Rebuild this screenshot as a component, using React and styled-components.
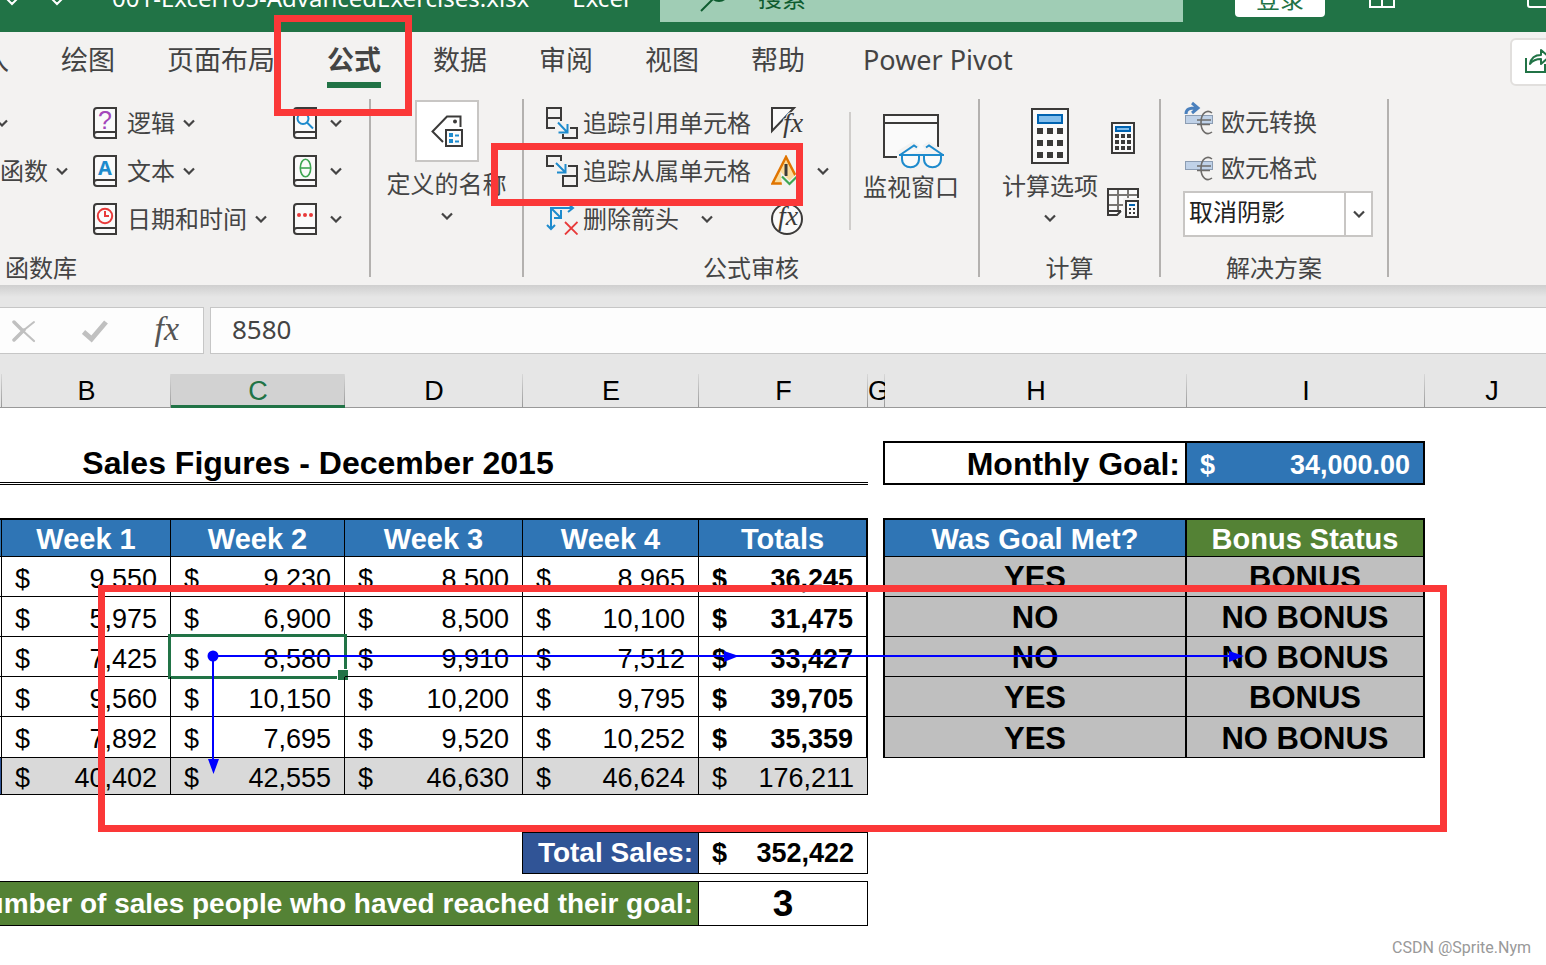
import styled, { createGlobalStyle } from 'styled-components';

const INK = '#3b3a39';
const BLUE = '#1e8bcd';
const GREEN = '#217346';

const weeks = ['Week 1', 'Week 2', 'Week 3', 'Week 4'];

const sales = [
  { weeks: ['9,550', '9,230', '8,500', '8,965'], total: '36,245', met: 'YES', bonus: 'BONUS' },
  { weeks: ['5,975', '6,900', '8,500', '10,100'], total: '31,475', met: 'NO', bonus: 'NO BONUS' },
  { weeks: ['7,425', '8,580', '9,910', '7,512'], total: '33,427', met: 'NO', bonus: 'NO BONUS' },
  { weeks: ['9,560', '10,150', '10,200', '9,795'], total: '39,705', met: 'YES', bonus: 'BONUS' },
  { weeks: ['7,892', '7,695', '9,520', '10,252'], total: '35,359', met: 'YES', bonus: 'NO BONUS' }
];

const totals = ['40,402', '42,555', '46,630', '46,624', '176,211'];

const columns = [
  { name: '', width: 234 },
  { name: 'B', width: 169 },
  { name: 'C', width: 174 },
  { name: 'D', width: 178 },
  { name: 'E', width: 176 },
  { name: 'F', width: 169 },
  { name: 'G', width: 17 },
  { name: 'H', width: 302 },
  { name: 'I', width: 238 },
  { name: 'J', width: 134 }
];

const tabs = ['插入', '绘图', '页面布局', '公式', '数据', '审阅', '视图', '帮助', 'Power Pivot'];

function App() {
  return (
    <Page>
      <GlobalStyle />
      <TitleBar />
      <TabBar>
        <Tabs>
          {tabs.map((tab) => (
            <Tab key={tab} $active={tab === '公式'} $wide={tab === 'Power Pivot'}>
              {tab}
            </Tab>
          ))}
        </Tabs>
        <ShareButton aria-label="Share">
          <svg width="26" height="26" viewBox="0 0 26 26" fill="none" stroke={GREEN} strokeWidth="2">
            <path d="M1 9v14h19v-8" />
            <path d="M5 15c1-6 5-9 11-9V1l8 7-8 7v-5c-5 0-8 1-11 5z" strokeLinejoin="round" />
          </svg>
        </ShareButton>
      </TabBar>
      <Ribbon>
        <LibraryGroup />
        <NamesGroup />
        <AuditGroup />
        <CalculationGroup />
        <SolutionsGroup />
      </Ribbon>
      <FormulaBar />
      <Sheet />
      <Highlight $left={274} $top={15} $width={138} $height={101} />
      <Highlight $left={491} $top={143} $width={312} $height={63} />
      <Highlight $left={98} $top={585} $width={1349} $height={247} />
      <Watermark>CSDN @Sprite.Nym</Watermark>
    </Page>
  );
}

export default App;

const TitleBar = () => (
  <Title>
    <TitleRow>
      <FileArea>
        <svg width="64" height="18" viewBox="0 0 64 18" fill="none" stroke="#fff" strokeWidth="2">
          <path d="M1 10l6 6 6-6M46 10l6 6 6-6" />
        </svg>
        <FileName>001-Excel105-AdvancedExercises.xlsx</FileName>
        <FileName>Excel</FileName>
      </FileArea>
      <SearchBox>
        <svg width="30" height="30" viewBox="0 0 30 30" fill="none" stroke="#0e5c2f" strokeWidth="2">
          <circle cx="19" cy="10" r="9" />
          <path d="M13 17L1 29" />
        </svg>
        <SearchInput aria-label="搜索" placeholder="搜索" />
      </SearchBox>
      <WindowArea>
        <LoginButton>登录</LoginButton>
        <svg width="26" height="22" viewBox="0 0 26 22" fill="none" stroke="#fff" strokeWidth="2">
          <path d="M1 1h24v20H1zM1 9h24M13 9v12" />
        </svg>
        <svg width="22" height="22" viewBox="0 0 22 22" fill="none" stroke="#fff" strokeWidth="2">
          <rect x="1" y="1" width="20" height="20" rx="2" />
        </svg>
      </WindowArea>
    </TitleRow>
  </Title>
);

const Chevron = () => (
  <svg width="12" height="8" viewBox="0 0 12 8" fill="none" stroke="#444" strokeWidth="2.2">
    <path d="M1 1.5l5 5 5-5" />
  </svg>
);

const Book = ({ children }) => (
  <svg width="24" height="32" viewBox="0 0 24 32" fill="none">
    <path d="M23 1H4a3 3 0 0 0-3 3v24a3 3 0 0 0 3 3h19z" fill="#fafafa" stroke={INK} strokeWidth="2" />
    <path d="M23 25H4a3 3 0 0 0-3 3" stroke={INK} strokeWidth="2" />
    {children}
  </svg>
);

const LibraryGroup = () => (
  <Group $width={371}>
    <GroupBody>
      <Column $width={93}>
        <Command $pull aria-label="自动求和">
          <Chevron />
        </Command>
        <Command $gap={8}>
          函数
          <Chevron />
        </Command>
      </Column>
      <Column $width={200}>
        <Command $gap={8}>
          <Book>
            <text x="12" y="22" fill="#a347ba" fontSize="25" fontFamily="Liberation Sans" textAnchor="middle">
              ?
            </text>
          </Book>
          <Label>逻辑</Label>
          <Chevron />
        </Command>
        <Command $gap={8}>
          <Book>
            <text x="12" y="20" fill={BLUE} fontSize="20" fontWeight="700" fontFamily="Noto Sans" textAnchor="middle">
              A
            </text>
          </Book>
          <Label>文本</Label>
          <Chevron />
        </Command>
        <Command $gap={8}>
          <Book>
            <circle cx="12" cy="13" r="7.2" stroke="#e83a3a" strokeWidth="2" />
            <path d="M12 8v5h4" stroke="#e83a3a" strokeWidth="2" />
          </Book>
          <Label>日期和时间</Label>
          <Chevron />
        </Command>
      </Column>
      <Column>
        <Command $gap={13} aria-label="查找与引用">
          <Book>
            <circle cx="10" cy="11.5" r="5.5" stroke={BLUE} strokeWidth="2" />
            <path d="M14 15.5l6 6" stroke={BLUE} strokeWidth="2" />
          </Book>
          <Chevron />
        </Command>
        <Command $gap={13} aria-label="数学和三角函数">
          <Book>
            <ellipse cx="12.5" cy="13" rx="5.2" ry="8.8" stroke="#3fa653" strokeWidth="1.6" />
            <path d="M7.500 13h10" stroke="#3fa653" strokeWidth="1.6" />
          </Book>
          <Chevron />
        </Command>
        <Command $gap={13} aria-label="其他函数">
          <Book>
            <g fill="#e83a3a">
              <circle cx="6" cy="12" r="2" />
              <circle cx="12" cy="12" r="2" />
              <circle cx="18" cy="12" r="2" />
            </g>
          </Book>
          <Chevron />
        </Command>
      </Column>
    </GroupBody>
    <GroupLabel $start>函数库</GroupLabel>
  </Group>
);

const NamesGroup = () => (
  <Group $width={153}>
    <GroupBody $center>
      <BigButton $top={1}>
        <NameBox>
          <svg width="32" height="32" viewBox="0 0 32 32" fill="none" stroke={INK} strokeWidth="2">
            <path d="M12 27L1.5 16.5 16 1.5h13.500V12" />
            <circle cx="24" cy="6.500" r="2" fill={INK} stroke="none" />
            <rect x="15" y="15" width="16" height="16" fill="#fafafa" />
            <g fill={BLUE} stroke="none">
              <path d="M18 18h4v4h-4zM18 24h4v4h-4zM24 19.500h4v2h-4zM24 25.500h4v2h-4z" />
            </g>
          </svg>
        </NameBox>
        <BigLabel>定义的名称</BigLabel>
        <Chevron />
      </BigButton>
    </GroupBody>
  </Group>
);

const AuditGroup = () => (
  <Group $width={456}>
    <GroupBody $indent>
      <Column $width={225}>
        <Command $gap={5}>
          <svg width="32" height="32" viewBox="0 0 32 32" fill="none" stroke={INK} strokeWidth="2">
            <path d="M9 21H1V1h14v13M1 11h14" />
            <path d="M24 21h7v10H17v-4" />
            <path d="M12 15.500l9 9.500M21.500 17v8.500h-9" stroke={BLUE} />
          </svg>
          追踪引用单元格
        </Command>
        <Command $gap={5}>
          <svg width="32" height="32" viewBox="0 0 32 32" fill="none" stroke={INK} strokeWidth="2">
            <path d="M8 11H1V1h14v5" />
            <path d="M22 11h9v20H17V21h14M17 21v-1" />
            <path d="M10 8l9 9M19.500 9v8.500H11" stroke={BLUE} />
          </svg>
          追踪从属单元格
        </Command>
        <Command $gap={5}>
          <svg width="32" height="32" viewBox="0 0 32 32" fill="none" stroke={BLUE} strokeWidth="2">
            <path d="M5 26V5h21M1 22l4 4 4-4M22 1l5 4-5 4" />
            <path d="M5 5l10 10M15 7v8H8" />
            <path d="M19 19l12.500 12.500M31.500 19L19 31.500" stroke="#e83a3a" strokeWidth="1.8" />
          </svg>
          <Label $wide>删除箭头</Label>
          <Chevron />
        </Command>
      </Column>
      <Column $width={78}>
        <Command aria-label="显示公式">
          <svg width="34" height="32" viewBox="0 0 34 32" fill="none">
            <path d="M1 24V1h22z" fill="#fafafa" stroke={INK} strokeWidth="2" />
            <FxText x="12" y="25" stroke="#f3f2f1" strokeWidth="2" paintOrder="stroke">
              fx
            </FxText>
          </svg>
        </Command>
        <Command $gap={14} aria-label="错误检查">
          <svg width="32" height="32" viewBox="0 0 32 32" fill="none">
            <path d="M15 2L1.500 28.500h27z" fill="#fbdc9b" stroke="#e07400" strokeWidth="2.500" />
            <path d="M15 9v12" stroke={INK} strokeWidth="3" />
            <path d="M12 22l6.500 6.500L26 21v9H13z" fill="#f3f2f1" stroke="#f3f2f1" strokeWidth="4" />
            <path d="M11 21.500l7.500 7.500 8-8" stroke="#3fa653" strokeWidth="2.200" />
          </svg>
          <Chevron />
        </Command>
        <Command aria-label="公式求值">
          <svg width="32" height="32" viewBox="0 0 32 32" fill="none">
            <circle cx="16" cy="16" r="15" fill="#fafafa" stroke={INK} strokeWidth="2" />
            <FxText x="7" y="22">
              fx
            </FxText>
          </svg>
        </Command>
      </Column>
      <Divider />
      <BigButton $top={15}>
        <svg width="62" height="54" viewBox="0 0 62 54" fill="none" overflow="visible">
          <g transform="translate(3 0)">
            <path d="M14 43H1V1h54v32" fill="#fafafa" stroke={INK} strokeWidth="2" />
            <path d="M1 9h54" stroke={INK} strokeWidth="2" />
            <path d="M15 40l15-9 5 3M61 40l-15-9-5 3" stroke="#f3f2f1" strokeWidth="6" />
            <g stroke={BLUE} strokeWidth="2" fill="#fafafa">
              <path d="M16 41h45M17 41l14-9.500 3 2M60 41l-14-9.500-3 2" fill="none" />
              <path d="M19 41h17v4c0 11-17 11-17 0zM41 41h17v4c0 11-17 11-17 0z" />
            </g>
          </g>
        </svg>
        <BigLabel $tight>监视窗口</BigLabel>
      </BigButton>
    </GroupBody>
    <GroupLabel>公式审核</GroupLabel>
  </Group>
);

const CalculationGroup = () => (
  <Group $width={181}>
    <GroupBody $indent>
      <BigButton $top={9}>
        <svg width="38" height="56" viewBox="0 0 38 56">
          <rect x="1" y="1" width="36" height="54" fill="#fafafa" stroke={INK} strokeWidth="2" />
          <rect x="7" y="7" width="24" height="8" fill="#83beec" stroke="#0063b1" strokeWidth="2" />
          <path
            d="M6 20h6v6H6zM16 20h6v6h-6zM26 20h6v6h-6zM6 32h6v6H6zM16 32h6v6h-6zM26 32h6v6h-6zM6 44h6v6H6zM16 44h6v6h-6zM26 44h6v6h-6z"
            fill={INK}
          />
        </svg>
        <BigLabel>计算选项</BigLabel>
        <Chevron />
      </BigButton>
      <SmallIcons>
        <IconButton aria-label="开始计算">
          <svg width="24" height="32" viewBox="0 0 24 32">
            <rect x="1" y="1" width="22" height="30" fill="#fafafa" stroke={INK} strokeWidth="2" />
            <rect x="5" y="5" width="14" height="4" fill="#83beec" stroke="#0063b1" strokeWidth="2" />
            <path
              d="M4 12h4v4H4zM10 12h4v4h-4zM16 12h4v4h-4zM4 18h4v4H4zM10 18h4v4h-4zM16 18h4v4h-4zM4 24h4v4H4zM10 24h4v4h-4zM16 24h4v4h-4z"
              fill={INK}
            />
          </svg>
        </IconButton>
        <IconButton aria-label="计算工作表">
          <svg width="32" height="30" viewBox="0 0 32 30" fill="none">
            <path d="M1 1h30v26H1z" fill="#fafafa" />
            <path d="M2 7h28M2 17h14M11 2v20M21 2v9" stroke="#797774" strokeWidth="2" />
            <path d="M31 10V1H1v26h9l4-4M1 23h13" stroke={INK} strokeWidth="2" />
            <path d="M16 10h16v20H16z" fill="#f3f2f1" />
            <rect x="19" y="13" width="12" height="16" fill="#fafafa" stroke={INK} strokeWidth="2" />
            <path d="M22 17h6" stroke="#0063b1" strokeWidth="2" />
            <path d="M22 20h2v2h-2zM26 20h2v2h-2zM22 24h2v2h-2zM26 24h2v2h-2z" fill={INK} />
          </svg>
        </IconButton>
      </SmallIcons>
    </GroupBody>
    <GroupLabel>计算</GroupLabel>
  </Group>
);

const EuroIcon = ({ convert }) => (
  <svg width="30" height="32" viewBox="0 0 30 32" fill="none" overflow="visible">
    <rect x="2.500" y="9.500" width="27" height="8" fill="#c0d2e8" stroke="#8c9db3" />
    {convert && (
      <path d="M3 8c0-5 3-6 11-6M9-3l6 5-6 5" stroke="#4a80bd" strokeWidth="3" />
    )}
    <path
      d="M29 7c-5-4-11 0-11 9.500S24 30 29 26M14 14h14M14 18.500h13"
      stroke="#6e6c6a"
      strokeWidth="1.600"
    />
  </svg>
);

const SolutionsGroup = () => (
  <Group $width={228}>
    <GroupBody $indent>
      <Column $grow>
        <Command $gap={8} $short>
          <EuroIcon convert />
          欧元转换
        </Command>
        <Command $gap={8} $short>
          <EuroIcon />
          欧元格式
        </Command>
        <Combo>
          <ComboSelect aria-label="欧元格式">
            <option>取消阴影</option>
          </ComboSelect>
          <ComboArrow>
            <Chevron />
          </ComboArrow>
        </Combo>
      </Column>
    </GroupBody>
    <GroupLabel>解决方案</GroupLabel>
  </Group>
);

const FormulaBar = () => (
  <Formula>
    <FormulaTools>
      <IconButton aria-label="取消">
        <svg width="24" height="24" viewBox="0 0 24 24" fill="none" stroke="#c0c0c0" strokeLinecap="round">
          <path d="M2 3l9 9" strokeWidth="3.500" />
          <path d="M11 12l11 10" strokeWidth="2.200" />
          <path d="M2 21L12 11" strokeWidth="3.500" />
          <path d="M12 11l10-8" strokeWidth="2" />
        </svg>
      </IconButton>
      <IconButton aria-label="输入">
        <svg width="26" height="24" viewBox="0 0 26 24" fill="none" stroke="#c0c0c0" strokeWidth="5">
          <path d="M1.500 13l8 7L24 3" />
        </svg>
      </IconButton>
      <FxButton aria-label="插入函数">fx</FxButton>
    </FormulaTools>
    <FormulaInput aria-label="编辑栏" defaultValue="8580" />
  </Formula>
);

const Money = ({ children, selected, ...cell }) => (
  <Cell {...cell}>
    <MoneyRow>
      <span>$</span>
      <span>{children}</span>
    </MoneyRow>
    {selected && <Selection />}
  </Cell>
);

const Sheet = () => (
  <SheetArea>
    <Table>
      <colgroup>
        {columns.map(({ name, width }) => (
          <Col key={name} $width={width} />
        ))}
        <col />
      </colgroup>
      <thead>
        <Row $height={34}>
          {columns.map(({ name }) => (
            <ColumnHead key={name} $active={name === 'C'}>
              {name}
            </ColumnHead>
          ))}
          <ColumnHead />
        </Row>
      </thead>
      <tbody>
        <Row $height={33} />
        <Row $height={44}>
          <Cell colSpan={6} $bold $size={32} $top={3} $double>
            Sales Figures - December 2015
          </Cell>
          <Cell $r={2} />
          <Cell $bold $size={32} $align="right" $top={2} $t={2} $r={2} $b={2}>
            Monthly Goal:
          </Cell>
          <Money $bold $bg="#2f75b5" $color="#fff" $top={4} $t={2} $r={2} $b={2}>
            34,000.00
          </Money>
        </Row>
        <Row $height={33} />
        <Row $height={39}>
          <Cell $bg="#2f75b5" $t={2} $r={1} $b={1} />
          {weeks.map((week) => (
            <HeadCell key={week} $t={2} $r={1} $b={1}>
              {week}
            </HeadCell>
          ))}
          <HeadCell $t={2} $r={2} $b={1}>
            Totals
          </HeadCell>
          <Cell $r={2} />
          <HeadCell $t={2} $r={2} $b={1}>
            Was Goal Met?
          </HeadCell>
          <HeadCell $bg="#548235" $t={2} $r={2} $b={1}>
            Bonus Status
          </HeadCell>
        </Row>
        {sales.map((row, i) => (
          <Row key={row.total} $height={i === sales.length - 1 ? 41 : 40}>
            <Cell $r={1} $b={1} />
            {row.weeks.map((amount, week) => (
              <Money key={week} $top={4} $r={1} $b={1} selected={amount === '8,580'}>
                {amount}
              </Money>
            ))}
            <Money $bold $top={4} $r={2} $b={1}>
              {row.total}
            </Money>
            <Cell $r={2} />
            <Cell $bold $size={31} $bg="#bfbfbf" $top={3} $r={2} $b={1}>
              {row.met}
            </Cell>
            <Cell $bold $size={31} $bg="#bfbfbf" $top={3} $r={2} $b={1}>
              {row.bonus}
            </Cell>
          </Row>
        ))}
        <Row $height={37}>
          <Cell $bg="#305496" $r={1} $b={1} />
          {totals.map((amount) => (
            <Money key={amount} $bg="#d9d9d9" $top={3} $r={1} $b={1}>
              {amount}
            </Money>
          ))}
        </Row>
        <Row $height={37} />
        <Row $height={42}>
          <Cell colSpan={4} $r={1} />
          <Cell $bold $size={28} $bg="#305496" $color="#fff" $align="right" $t={1} $r={1} $b={1}>
            Total Sales:
          </Cell>
          <Money $bold $t={1} $r={1} $b={1}>
            352,422
          </Money>
        </Row>
        <Row $height={7} />
        <Row $height={45}>
          <Cell colSpan={5} $bold $size={28} $bg="#548235" $color="#fff" $align="right" $t={1} $r={1} $b={1}>
            Number of sales people who haved reached their goal:
          </Cell>
          <Cell $bold $size={37} $t={1} $r={1} $b={1}>
            3
          </Cell>
        </Row>
      </tbody>
    </Table>
    <Arrows width="1260" height="420" viewBox="0 0 1260 420" fill="#00f">
      <path d="M213 282h1020M213 282v105" stroke="#00f" strokeWidth="2" />
      <circle cx="213" cy="282" r="5.500" />
      <path d="M724 277l15 5-15 6zM1229 277l15 5-15 6zM208 385h11l-5.500 15z" />
    </Arrows>
  </SheetArea>
);

const GlobalStyle = createGlobalStyle`
  * {
    box-sizing: border-box;
  }

  body {
    margin: 0;
    overflow-x: hidden;
    font-family: 'Noto Sans', 'Noto Sans CJK SC', sans-serif;
    color: #444;
  }

  svg {
    flex-shrink: 0;
  }

  button, input, select {
    font: inherit;
    color: inherit;
  }
`;

const Page = styled.main`
  position: relative;
  min-height: 100vh;
  overflow: hidden;
  background: #fff;
`;

const Title = styled.header`
  display: flex;
  align-items: flex-end;
  height: 32px;
  overflow: hidden;
  background: ${GREEN};
  color: #fff;
  font-size: 24px;
`;

const TitleRow = styled.div`
  display: flex;
  flex: 1;
  align-items: center;
  height: 70px;
`;

const FileArea = styled.div`
  display: flex;
  flex: 0 0 660px;
  align-items: center;
  gap: 43px;
  padding-left: 5px;
`;

const FileName = styled.span`
  white-space: nowrap;
`;

const SearchBox = styled.div`
  display: flex;
  flex: 1;
  align-items: center;
  gap: 28px;
  height: 50px;
  padding-left: 40px;
  background: #a0cdb5;
`;

const SearchInput = styled.input`
  flex: 1;
  min-width: 0;
  padding: 0;
  border: none;
  background: none;

  &::placeholder {
    color: #0e5c2f;
    opacity: 1;
  }
`;

const WindowArea = styled.div`
  display: flex;
  flex: 0 0 363px;
  align-items: center;
  min-width: 0;
  padding-left: 52px;

  svg {
    margin-left: 44px;
  }

  svg + svg {
    margin-left: 132px;
  }
`;

const LoginButton = styled.button`
  flex: 0 0 90px;
  height: 40px;
  padding: 0;
  border: none;
  border-radius: 4px;
  background: #fff;
  color: ${GREEN};
`;

const TabBar = styled.div`
  display: flex;
  justify-content: space-between;
  height: 67px;
  background: #f3f2f1;
`;

const Tabs = styled.nav`
  display: flex;
  gap: 52px;
  margin-left: -45px;
`;

const Tab = styled.button`
  height: 56px;
  padding: 6px ${({ $wide }) => ($wide ? 6 : 0)}px 0;
  border: none;
  border-bottom: 6px solid ${({ $active }) => ($active ? GREEN : 'transparent')};
  background: none;
  font-size: 27px;
  font-weight: ${({ $active }) => ($active ? 700 : 400)};
  line-height: 44px;
  white-space: nowrap;
`;

const ShareButton = styled.button`
  display: flex;
  align-items: center;
  width: 64px;
  height: 48px;
  margin: 6px -28px 0 0;
  padding: 0 0 0 13px;
  border: 2px solid #e1dfdd;
  border-radius: 6px;
  background: #fff;
`;

const Ribbon = styled.section`
  display: flex;
  padding-bottom: 8px;
  background: #f3f2f1;
  font-size: 24px;
  line-height: 28px;
`;

const Group = styled.div`
  display: flex;
  flex: 0 0 ${({ $width }) => $width}px;
  flex-direction: column;
  justify-content: space-between;
  height: 178px;
  border-right: 2px solid #b3b1af;
`;

const GroupBody = styled.div`
  display: flex;
  justify-content: ${({ $center }) => ($center ? 'center' : 'flex-start')};
  padding-left: ${({ $indent }) => ($indent ? 22 : 0)}px;
`;

const GroupLabel = styled.div`
  padding-left: ${({ $start }) => ($start ? 5 : 0)}px;
  line-height: 18px;
  text-align: ${({ $start }) => ($start ? 'left' : 'center')};
`;

const Column = styled.div`
  display: flex;
  flex: ${({ $grow, $width }) => ($grow ? '1' : $width ? `0 0 ${$width}px` : '0 0 auto')};
  flex-direction: column;
  align-items: flex-start;
`;

const Command = styled.button`
  display: flex;
  align-items: center;
  gap: ${({ $gap }) => $gap || 0}px;
  height: ${({ $short }) => ($short ? 46 : 48)}px;
  margin-left: ${({ $pull }) => ($pull ? -4 : 0)}px;
  padding: 0;
  border: none;
  background: none;
  white-space: nowrap;
`;

const Label = styled.span`
  padding: 0 ${({ $wide }) => ($wide ? 17 : 0)}px 0 ${({ $wide }) => ($wide ? 0 : 2)}px;
`;

const BigButton = styled.button`
  display: flex;
  flex-direction: column;
  align-items: center;
  padding: ${({ $top }) => $top}px 0 0;
  border: none;
  background: none;
  white-space: nowrap;
`;

const BigLabel = styled.span`
  padding: ${({ $tight }) => ($tight ? 5 : 8)}px 0 14px;
`;

const NameBox = styled.span`
  display: flex;
  align-items: center;
  justify-content: center;
  width: 64px;
  height: 62px;
  border: 2px solid #c8c6c4;
  background: #fff;
`;

const Divider = styled.div`
  width: 2px;
  height: 118px;
  margin: 13px 12px 0 0;
  background: #cfcdcb;
`;

const SmallIcons = styled.div`
  display: flex;
  flex-direction: column;
  align-items: center;
  gap: 34px;
  padding: 23px 0 0 9px;
`;

const IconButton = styled.button`
  display: flex;
  padding: 0;
  border: none;
  background: none;
`;

const FxText = styled.text`
  fill: ${INK};
  font-family: 'Liberation Serif', serif;
  font-size: 28px;
  font-style: italic;
`;

const Combo = styled.div`
  display: flex;
  width: 190px;
  height: 46px;
  border: 2px solid #c8c6c4;
  background: #fff;
`;

const ComboSelect = styled.select`
  flex: 1;
  min-width: 0;
  padding: 0 0 4px 4px;
  border: none;
  background: none;
  color: #222;
  appearance: none;
`;

const ComboArrow = styled.span`
  display: flex;
  align-items: center;
  justify-content: center;
  width: 27px;
  border-left: 2px solid #c8c6c4;
  pointer-events: none;
`;

const Formula = styled.section`
  display: flex;
  gap: 6px;
  padding: 22px 0 20px;
  background: linear-gradient(#cfcfcf, #e6e6e6 12px);
`;

const FormulaTools = styled.div`
  display: flex;
  align-items: center;
  justify-content: space-between;
  width: 204px;
  height: 47px;
  padding: 0 24px 0 12px;
  border: 1px solid #c6c6c6;
  border-left: none;
  background: #fdfdfd;
`;

const FxButton = styled.button`
  padding: 0 0 4px;
  border: none;
  background: none;
  color: #555;
  font: italic 34px/36px 'Liberation Serif', serif;
`;

const FormulaInput = styled.input`
  flex: 1;
  min-width: 0;
  height: 47px;
  padding: 0 21px 4px;
  border: 1px solid #c6c6c6;
  border-right: none;
  background: #fdfdfd;
  font-size: 26px;
`;

/* Column A is scrolled out of view up to its right edge */
const SheetArea = styled.section`
  position: relative;
  margin-left: -232px;
  color: #000;
  font-family: 'Liberation Sans', Arial, sans-serif;
  font-size: 27px;
  line-height: 32px;
`;

const Table = styled.table`
  width: 100%;
  border-spacing: 0;
  table-layout: fixed;
`;

const Col = styled.col`
  width: ${({ $width }) => $width}px;
`;

const Row = styled.tr`
  height: ${({ $height }) => $height}px;
`;

const ColumnHead = styled.th`
  padding: ${({ $active }) => ($active ? 4 : 2)}px 0 0;
  overflow: hidden;
  border-bottom: ${({ $active }) => ($active ? `3px solid ${GREEN}` : '1px solid #999')};
  background: linear-gradient(#d8d8d8, #999) right / 1px 100% no-repeat
    ${({ $active }) => ($active ? '#d2d2d2' : '#e6e6e6')};
  color: ${({ $active }) => ($active ? GREEN : '#000')};
  font-weight: 400;
  line-height: 27px;
`;

const Cell = styled.td`
  position: relative;
  padding: ${({ $top }) => $top || 0}px ${({ $align }) => ($align ? 5 : 0)}px 0 0;
  border: 0 solid #000;
  border-top-width: ${({ $t }) => $t || 0}px;
  border-right-width: ${({ $r }) => $r || 0}px;
  border-bottom: ${({ $b, $double }) => ($double ? '3px double' : `${$b || 0}px solid`)} #000;
  background: ${({ $bg }) => $bg || 'none'};
  color: ${({ $color }) => $color || '#000'};
  font-size: ${({ $size }) => $size || 27}px;
  font-weight: ${({ $bold }) => ($bold ? 700 : 400)};
  text-align: ${({ $align }) => $align || 'center'};
  white-space: nowrap;
`;

const HeadCell = styled(Cell).attrs(({ $bg }) => ({
  $bg: $bg || '#2f75b5',
  $color: '#fff',
  $bold: true,
  $size: 29,
  $top: 2
}))``;

const MoneyRow = styled.div`
  display: flex;
  justify-content: space-between;
  padding: 0 13px;
`;

const Selection = styled.div`
  position: absolute;
  inset: -3px;
  border: 3px solid ${GREEN};

  &::after {
    content: '';
    position: absolute;
    right: -5px;
    bottom: -5px;
    width: 10px;
    height: 10px;
    border: 1px solid #fff;
    background: ${GREEN};
  }
`;

const Arrows = styled.svg`
  position: absolute;
  top: 0;
  left: 232px;
  pointer-events: none;
`;

const Highlight = styled.div`
  position: absolute;
  top: ${({ $top }) => $top}px;
  left: ${({ $left }) => $left}px;
  width: ${({ $width }) => $width}px;
  height: ${({ $height }) => $height}px;
  border: 7px solid #fb3838;
  pointer-events: none;
`;

const Watermark = styled.div`
  position: absolute;
  right: 15px;
  bottom: 7px;
  color: #999;
  font: 16px/20px Roboto, sans-serif;
`;
